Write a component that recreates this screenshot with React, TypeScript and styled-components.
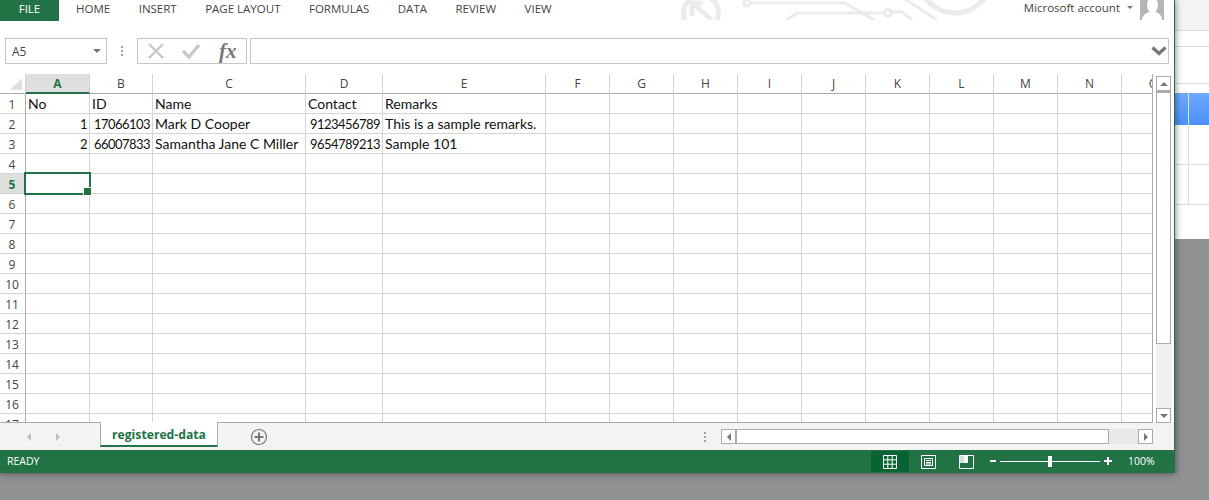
import * as React from 'react';
import styled, { createGlobalStyle } from 'styled-components';

const UI_FONT = '"Open Sans", "Noto Sans", sans-serif';
const GREEN = '#217346';

const GlobalStyle = createGlobalStyle`
  html, body {
    margin: 0;
    padding: 0;
    background: #909193;
  }
  * {
    box-sizing: border-box;
  }
`;

const Page = styled.div`
  width: 1209px;
  height: 500px;
  display: flex;
  align-items: flex-start;
  overflow: hidden;
  background: #909193;
  font-family: ${UI_FONT};
`;

const Window = styled.div`
  position: relative;
  z-index: 1;
  flex: none;
  width: 1175px;
  height: 473px;
  display: flex;
  flex-direction: column;
  background: #fff;
  border-right: 1px solid ${GREEN};
  box-shadow: 0 0 7px rgba(0, 0, 0, 0.55);
`;

/* ribbon */
const Ribbon = styled.div`
  position: relative;
  flex: none;
  height: 21px;
  display: flex;
  align-items: flex-start;
`;

const RibbonArt = styled.svg`
  position: absolute;
  left: 660px;
  top: 0;
`;

const FileTab = styled.div`
  width: 59px;
  height: 21px;
  margin-right: 17px;
  background: ${GREEN};
  color: #fff;
  font-size: 11.5px;
  line-height: 18px;
  text-align: center;
`;

const TabList = styled.div`
  position: relative;
  display: flex;
  gap: 28.5px;
`;

const RibbonTab = styled.div`
  color: #444;
  font-size: 11.5px;
  line-height: 18px;
  white-space: nowrap;
`;

const Account = styled.div`
  position: relative;
  margin-left: auto;
  margin-right: 10px;
  display: flex;
  align-items: flex-start;
`;

const AccountName = styled.span`
  color: #444;
  font-size: 11.5px;
  line-height: 15px;
  white-space: nowrap;
`;

const AccountCaret = styled.span`
  width: 0;
  height: 0;
  margin: 6px 7px 0 7px;
  border-left: 3px solid transparent;
  border-right: 3px solid transparent;
  border-top: 3px solid #777;
`;

/* formula bar */
const FormulaBar = styled.div`
  flex: none;
  height: 26px;
  margin-top: 17px;
  padding: 0 5px;
  display: flex;
  align-items: stretch;
`;

const NameBox = styled.div`
  width: 102px;
  padding: 0 5px 0 6px;
  display: flex;
  align-items: center;
  justify-content: space-between;
  border: 1px solid #c6c6c6;
  color: #444;
  font-size: 12px;
`;

const Caret = styled.span`
  width: 0;
  height: 0;
  border-left: 4px solid transparent;
  border-right: 4px solid transparent;
  border-top: 4px solid #777;
`;

const Grip = styled.div`
  width: 30px;
  display: flex;
  flex-direction: column;
  align-items: center;
  justify-content: center;
  gap: 2px;
`;

const GripDot = styled.span`
  width: 2px;
  height: 2px;
  background: #a0a0a0;
`;

const FormulaButtons = styled.div`
  width: 110px;
  padding-left: 9px;
  display: flex;
  align-items: center;
  border: 1px solid #c6c6c6;
`;

const AcceptIcon = styled.svg`
  margin-left: 16px;
`;

const FxLabel = styled.span`
  margin-left: 18px;
  color: #777;
  font-family: "Liberation Serif", serif;
  font-size: 21px;
  font-style: italic;
  font-weight: 700;
  line-height: 22px;
`;

const FormulaInput = styled.div`
  flex: 1;
  margin-left: 3px;
  padding-right: 1px;
  display: flex;
  align-items: center;
  justify-content: flex-end;
  border: 1px solid #c6c6c6;
`;

/* sheet */
const Main = styled.div`
  flex: none;
  height: 349px;
  margin-top: 10px;
  display: flex;
`;

const Sheet = styled.div`
  width: 1153px;
  height: 349px;
  display: grid;
  grid-template-columns: 26px 64px 63px 153px 77px 163px repeat(10, 64px);
  grid-auto-rows: 20px;
  overflow: hidden;
  border-right: 1px solid #ababab;
  border-bottom: 1px solid #ababab;
  background: #fff;
`;

const Corner = styled.div`
  position: relative;
  border-right: 1px solid #d4d4d4;
  border-bottom: 1px solid #ababab;
  &::after {
    content: '';
    position: absolute;
    right: 3px;
    bottom: 3px;
    border-left: 12px solid transparent;
    border-bottom: 12px solid #dfdfdf;
  }
`;

const ColHead = styled.div<{ $active?: boolean }>`
  display: flex;
  align-items: center;
  justify-content: center;
  overflow: hidden;
  background: ${(p) => (p.$active ? '#dfdfdf' : '#fff')};
  border-right: 1px solid #d4d4d4;
  border-bottom: ${(p) => (p.$active ? `2px solid ${GREEN}` : '1px solid #ababab')};
  color: ${(p) => (p.$active ? GREEN : '#444')};
  font-size: 12px;
  font-weight: ${(p) => (p.$active ? 700 : 400)};
`;

const RowHead = styled.div<{ $active?: boolean }>`
  display: flex;
  align-items: center;
  justify-content: center;
  background: ${(p) => (p.$active ? '#dfdfdf' : '#fff')};
  border-right: 1px solid ${(p) => (p.$active ? GREEN : '#ababab')};
  border-bottom: 1px solid #d4d4d4;
  color: ${(p) => (p.$active ? GREEN : '#444')};
  font-size: 12px;
  font-weight: ${(p) => (p.$active ? 700 : 400)};
  padding: 1px 1px 0 0;
`;

const Cell = styled.div<{ $right?: boolean; $selected?: boolean }>`
  position: relative;
  z-index: ${(p) => (p.$selected ? 1 : 'auto')};
  padding: 0 2px;
  border-right: 1px solid #d4d4d4;
  border-bottom: 1px solid #d4d4d4;
  color: #111;
  font-family: Lato, sans-serif;
  font-size: ${(p) => (p.$right ? '13px' : '14px')};
  letter-spacing: ${(p) => (p.$right ? '-0.55px' : '0')};
  line-height: 20px;
  text-align: ${(p) => (p.$right ? 'right' : 'left')};
  white-space: nowrap;
  ${(p) =>
    p.$selected
      ? `
    &::before {
      content: '';
      position: absolute;
      inset: -2px -2px -2px -2px;
      border: 2px solid ${GREEN};
    }
    &::after {
      content: '';
      position: absolute;
      right: -3px;
      bottom: -3px;
      width: 7px;
      height: 7px;
      background: ${GREEN};
      border: 1px solid #fff;
    }
  `
      : ''}
`;

/* vertical scrollbar */
const VScroll = styled.div`
  flex: 1;
  padding: 2px 0 0 3px;
  display: flex;
  flex-direction: column;
  align-items: flex-start;
  background: #fff;
`;

const ScrollButton = styled.div`
  flex: none;
  width: 15px;
  height: 15px;
  display: flex;
  align-items: center;
  justify-content: center;
  background: #fff;
  border: 1px solid #ababab;
`;

const ArrowUp = styled.span`
  width: 0;
  height: 0;
  border-left: 4px solid transparent;
  border-right: 4px solid transparent;
  border-bottom: 4px solid #777;
`;

const ArrowDown = styled.span`
  width: 0;
  height: 0;
  border-left: 4px solid transparent;
  border-right: 4px solid transparent;
  border-top: 4px solid #777;
`;

const VThumb = styled.div`
  flex: none;
  width: 15px;
  height: 253px;
  background: #fff;
  border: 1px solid #ababab;
  border-top-width: 2px;
`;

const VTrough = styled.div`
  flex: none;
  width: 15px;
  height: 64px;
  background: #f0f0f0;
`;

/* sheet tabs */
const TabBar = styled.div`
  flex: none;
  height: 27px;
  display: flex;
  align-items: flex-start;
  background: #f3f3f3;
`;

const NavArrows = styled.div`
  width: 100px;
  height: 27px;
  padding-left: 27px;
  display: flex;
  align-items: center;
  gap: 25px;
`;

const NavLeft = styled.span`
  width: 0;
  height: 0;
  border-top: 4px solid transparent;
  border-bottom: 4px solid transparent;
  border-right: 4px solid #bdbdbd;
`;

const NavRight = styled.span`
  width: 0;
  height: 0;
  border-top: 4px solid transparent;
  border-bottom: 4px solid transparent;
  border-left: 4px solid #bdbdbd;
`;

const SheetTab = styled.div`
  width: 118px;
  height: 25px;
  margin-top: -1px;
  background: #fff;
  border-left: 1px solid #ababab;
  border-right: 1px solid #ababab;
  border-bottom: 2px solid ${GREEN};
  color: ${GREEN};
  font-size: 12.2px;
  font-weight: 700;
  line-height: 25px;
  text-align: center;
`;

const AddSheet = styled.svg`
  flex: none;
  margin: 5px 0 0 32px;
`;

const TabGrip = styled.div`
  width: 12px;
  height: 27px;
  margin-left: 431px;
  display: flex;
  flex-direction: column;
  align-items: center;
  justify-content: center;
  gap: 2px;
`;

const HScroll = styled.div`
  width: 432px;
  height: 15px;
  margin: 6px 0 0 10px;
  display: flex;
`;

const HThumb = styled.div`
  width: 373px;
  background: #fff;
  border: 1px solid #ababab;
`;

const HTrough = styled.div`
  flex: 1;
  background: #e9e9e9;
`;

const SmallLeft = styled.span`
  width: 0;
  height: 0;
  border-top: 4px solid transparent;
  border-bottom: 4px solid transparent;
  border-right: 4px solid #777;
`;

const SmallRight = styled.span`
  width: 0;
  height: 0;
  border-top: 4px solid transparent;
  border-bottom: 4px solid transparent;
  border-left: 4px solid #777;
`;

/* status bar */
const StatusBar = styled.div`
  flex: none;
  height: 23px;
  padding-left: 7px;
  padding-bottom: 1px;
  display: flex;
  align-items: center;
  background: ${GREEN};
  color: #fff;
  font-size: 10.5px;
`;

const StatusText = styled.span`
  margin-right: auto;
`;

const ViewButton = styled.div<{ $active?: boolean }>`
  width: 38px;
  height: 21px;
  margin-top: 1px;
  display: flex;
  align-items: center;
  justify-content: center;
  background: ${(p) => (p.$active ? '#0a6332' : 'transparent')};
`;

const ZoomSlider = styled.div`
  width: 122px;
  margin-left: 5px;
  display: flex;
  align-items: center;
  justify-content: space-between;
`;

const SliderTrack = styled.div`
  position: relative;
  width: 100px;
  height: 1px;
  background: #fff;
`;

const SliderThumb = styled.span`
  position: absolute;
  left: 48px;
  top: -5px;
  width: 4px;
  height: 11px;
  background: #fff;
`;

const ZoomSign = styled.svg`
  flex: none;
`;

const ZoomValue = styled.span`
  width: 62px;
  padding-left: 16px;
  font-size: 10.5px;
`;

/* window behind */
const Behind = styled.div`
  flex: 1;
  height: 239px;
  display: flex;
  flex-direction: column;
  background: #fff;
`;

const BehindTop = styled.div`
  flex: none;
  height: 31px;
  background: #f4f4f4;
  border-bottom: 1px solid #dcdcdc;
`;

const BehindLine = styled.div<{ $h: number }>`
  flex: none;
  height: ${(p) => p.$h}px;
  border-bottom: 1px solid #dcdcdc;
`;

const BehindGap = styled.div`
  flex: none;
  height: 9px;
`;

const BehindSelected = styled.div`
  flex: none;
  height: 32px;
  display: flex;
  background: linear-gradient(#6ea8ff, #4d90fb);
`;

const BehindCell = styled.div<{ $selected?: boolean }>`
  width: 14px;
  border-right: 1px solid ${(p) => (p.$selected ? '#d6e4fb' : '#dcdcdc')};
`;

const BehindRow = styled.div`
  flex: none;
  height: 40px;
  border-bottom: 1px solid #dcdcdc;
  display: flex;
`;

const columns: { key: string; active?: boolean }[] = [
  { key: 'A', active: true },
  ...'BCDEFGHIJKLMNO'.split('').map((key) => ({ key })),
];

type CellData = { text: string; right?: boolean };

const data: CellData[][] = [
  [{ text: 'No' }, { text: 'ID' }, { text: 'Name' }, { text: 'Contact' }, { text: 'Remarks' }],
  [
    { text: '1', right: true },
    { text: '17066103', right: true },
    { text: 'Mark D Cooper' },
    { text: '9123456789', right: true },
    { text: 'This is a sample remarks.' },
  ],
  [
    { text: '2', right: true },
    { text: '66007833', right: true },
    { text: 'Samantha Jane C Miller' },
    { text: '9654789213', right: true },
    { text: 'Sample 101' },
  ],
];

const tabs = ['HOME', 'INSERT', 'PAGE LAYOUT', 'FORMULAS', 'DATA', 'REVIEW', 'VIEW'];
const rows = Array.from({ length: 17 }, (_, i) => i + 1);

const App: React.FC = () => {
  return (
    <>
      <GlobalStyle />
      <Page>
        <Window>
          <Ribbon>
            <RibbonArt width="340" height="20" viewBox="0 0 340 20" fill="none" stroke="#ebebeb" strokeWidth="3">
              <circle cx="41" cy="13" r="17.5" strokeWidth="5" />
              <path d="M32 3 H42 M32 3 V16 M32 3 L52 20" strokeWidth="4.5" />
              <circle cx="87" cy="3" r="3" />
              <path d="M90 3 H185 L214 20" />
              <path d="M125 21 L137 13 H224" />
              <circle cx="228" cy="13" r="3.5" />
              <path d="M232 12 H242 L252 20" />
              <path d="M245 -1 L277 20" />
              <circle cx="295" cy="-23.6" r="36.6" strokeWidth="5" />
            </RibbonArt>
            <FileTab>FILE</FileTab>
            <TabList>
              {tabs.map((tab) => (
                <RibbonTab key={tab}>{tab}</RibbonTab>
              ))}
            </TabList>
            <Account>
              <AccountName>Microsoft account</AccountName>
              <AccountCaret />
              <svg width="24" height="20" viewBox="0 0 24 20">
                <rect width="24" height="20" fill="#b4b4b4" />
                <ellipse cx="12.5" cy="5" rx="5.5" ry="8" fill="#fff" />
                <path d="M2 20 C2 15 6 13.5 9 12 H16 C19 13.5 22 15 22 20 Z" fill="#fff" />
              </svg>
            </Account>
          </Ribbon>

          <FormulaBar>
            <NameBox>
              A5
              <Caret />
            </NameBox>
            <Grip>
              <GripDot />
              <GripDot />
              <GripDot />
            </Grip>
            <FormulaButtons>
              <svg width="18" height="18" viewBox="0 0 18 18" stroke="#c8c8c8" strokeWidth="2.4" fill="none">
                <path d="M2 2 L16 16 M16 2 L2 16" />
              </svg>
              <AcceptIcon width="20" height="18" viewBox="0 0 20 18" fill="none" stroke="#c8c8c8" strokeWidth="3.4">
                <path d="M2 9 L8 15 L18 3" />
              </AcceptIcon>
              <FxLabel>fx</FxLabel>
            </FormulaButtons>
            <FormulaInput>
              <svg width="16" height="10" viewBox="0 0 16 10" fill="none" stroke="#777" strokeWidth="3.2">
                <path d="M1.5 1.5 L8 7.5 L14.5 1.5" />
              </svg>
            </FormulaInput>
          </FormulaBar>

          <Main>
            <Sheet>
              <Corner />
              {columns.map((col) => (
                <ColHead key={col.key} $active={col.active}>
                  {col.key}
                </ColHead>
              ))}
              {rows.map((row) => (
                <React.Fragment key={row}>
                  <RowHead $active={row === 5}>{row}</RowHead>
                  {columns.map((col, c) => {
                    const cell = data[row - 1]?.[c];
                    return (
                      <Cell
                        key={col.key}
                        $right={cell?.right}
                        $selected={row === 5 && c === 0}
                      >
                        {cell?.text}
                      </Cell>
                    );
                  })}
                </React.Fragment>
              ))}
            </Sheet>
            <VScroll>
              <ScrollButton>
                <ArrowUp />
              </ScrollButton>
              <VThumb />
              <VTrough />
              <ScrollButton>
                <ArrowDown />
              </ScrollButton>
            </VScroll>
          </Main>

          <TabBar>
            <NavArrows>
              <NavLeft />
              <NavRight />
            </NavArrows>
            <SheetTab>registered-data</SheetTab>
            <AddSheet width="18" height="18" viewBox="0 0 18 18" fill="none" stroke="#777">
              <circle cx="9" cy="9" r="7.5" strokeWidth="1.2" />
              <path d="M9 4.5 V13.5 M4.5 9 H13.5" strokeWidth="2" />
            </AddSheet>
            <TabGrip>
              <GripDot />
              <GripDot />
              <GripDot />
            </TabGrip>
            <HScroll>
              <ScrollButton>
                <SmallLeft />
              </ScrollButton>
              <HThumb />
              <HTrough />
              <ScrollButton>
                <SmallRight />
              </ScrollButton>
            </HScroll>
          </TabBar>

          <StatusBar>
            <StatusText>READY</StatusText>
            <ViewButton $active>
              <svg width="14" height="14" viewBox="0 0 14 14" fill="none" stroke="#fff">
                <path d="M.5 .5 H13.5 V13.5 H.5 Z M.5 4.8 H13.5 M.5 9.2 H13.5 M4.8 .5 V13.5 M9.2 .5 V13.5" />
              </svg>
            </ViewButton>
            <ViewButton>
              <svg width="15" height="14" viewBox="0 0 15 14" fill="none" stroke="#fff">
                <path d="M.5 .5 H14.5 V13.5 H.5 Z M3.5 3.5 H11.5 V10.5 H3.5 Z M5 5.5 H10 M5 7.5 H10 M5 9 H10" />
              </svg>
            </ViewButton>
            <ViewButton>
              <svg width="15" height="14" viewBox="0 0 15 14" fill="none">
                <path d="M.5 .5 H14.5 V13.5 H.5 Z" stroke="#fff" />
                <path d="M1 1 H5 V8 H1 Z" fill="#cfe3d8" />
                <path d="M5 1 H9 V8 H5 Z" fill="#fff" />
              </svg>
            </ViewButton>
            <ZoomSlider>
              <ZoomSign width="6" height="3" viewBox="0 0 6 3">
                <rect width="6" height="2" fill="#fff" />
              </ZoomSign>
              <SliderTrack>
                <SliderThumb />
              </SliderTrack>
              <ZoomSign width="8" height="8" viewBox="0 0 8 8">
                <path d="M3 0 H5 V3 H8 V5 H5 V8 H3 V5 H0 V3 H3 Z" fill="#fff" />
              </ZoomSign>
            </ZoomSlider>
            <ZoomValue>100%</ZoomValue>
          </StatusBar>
        </Window>

        <Behind>
          <BehindTop />
          <BehindLine $h={16} />
          <BehindLine $h={37} />
          <BehindGap />
          <BehindSelected>
            <BehindCell $selected />
          </BehindSelected>
          <BehindRow>
            <BehindCell />
          </BehindRow>
          <BehindRow>
            <BehindCell />
          </BehindRow>
        </Behind>
      </Page>
    </>
  );
};

export default App;
